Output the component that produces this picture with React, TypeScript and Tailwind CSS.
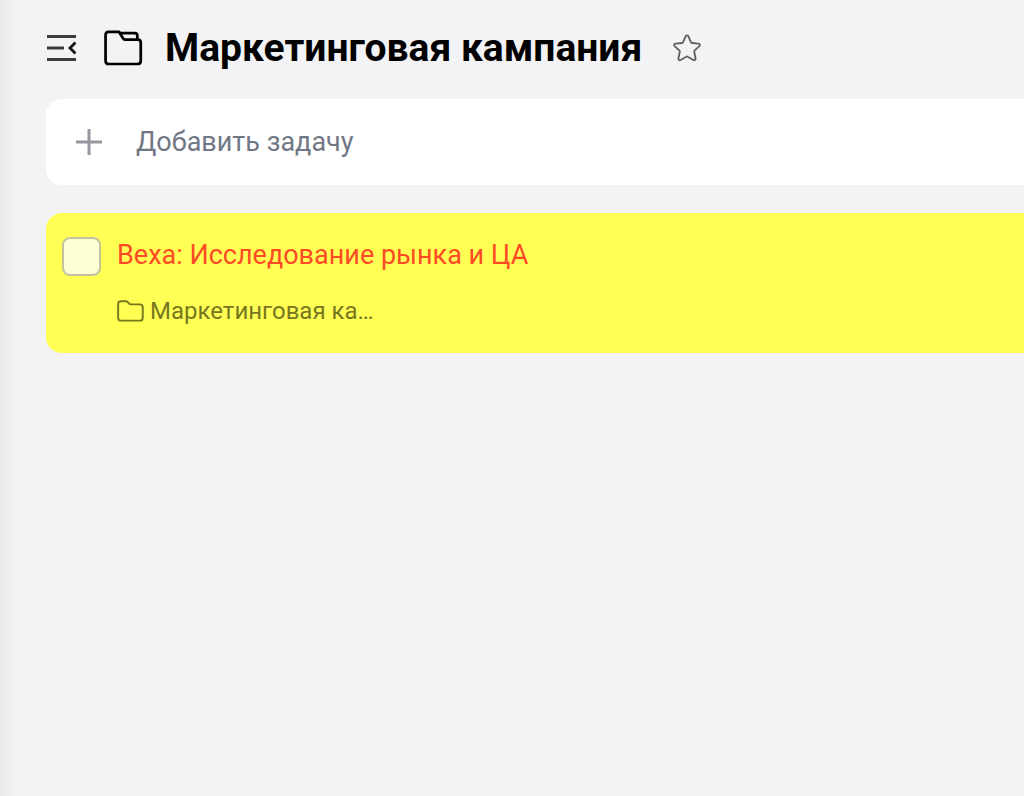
import { useState } from 'react';

interface Task {
  id: string;
  title: string;
  project: string;
}

const tasks: Task[] = [
  { id: 'task-1', title: 'Веха: Исследование рынка и ЦА', project: 'Маркетинговая ка…' },
];

function CollapseIcon() {
  return (
    <svg width="32" height="30" viewBox="0 0 32 30" fill="none" aria-hidden="true">
      <path d="M1 3.5H30M1 15H18M1 26.5H30" stroke="#3c3c3e" strokeWidth="2.8" />
      <path d="M29.5 9.5L24 15L29.5 20.5" stroke="#111111" strokeWidth="2.8" />
    </svg>
  );
}

function ProjectIcon() {
  return (
    <svg width="39" height="36" viewBox="0 0 40 36" fill="none" stroke="#000000" strokeWidth="2.8" strokeLinejoin="round" aria-hidden="true">
      <path d="M4.5 1.5H15.5L19.5 8C20 8.9 20.6 9.3 21.5 9.3H34.5C36.5 9.3 37.7 10.5 37.7 12.5V31C37.7 33.2 36.5 34.4 34.3 34.4H5C2.8 34.4 1.6 33.2 1.6 31V4.5C1.6 2.6 2.6 1.5 4.5 1.5Z" />
      <path d="M15.5 2.8H31.5C33.3 2.8 34.2 3.7 34.2 5.4V9.3" />
    </svg>
  );
}

function StarIcon() {
  return (
    <svg width="30" height="30" viewBox="0 0 30 30" fill="none" stroke="#5f5f62" strokeWidth="1.8" strokeLinejoin="round" aria-hidden="true">
      <path d="M13.7 3.2C14.2 2 15.8 2 16.3 3.2L18.9 9.2C19.1 9.7 19.5 10 20 10L26.6 10.7C27.9 10.8 28.4 12.3 27.4 13.2L22.7 17.4C22.3 17.8 22.1 18.3 22.2 18.8L23.6 25.5C23.8 26.8 22.6 27.6 21.4 27L15.7 23.8C15.3 23.5 14.7 23.5 14.3 23.8L8.6 27C7.4 27.6 6.2 26.8 6.4 25.5L7.8 18.8C7.9 18.3 7.7 17.8 7.3 17.4L2.6 13.2C1.6 12.3 2.1 10.8 3.4 10.7L10 10C10.5 10 10.9 9.7 11.1 9.2Z" />
    </svg>
  );
}

function FolderIcon() {
  return (
    <svg width="27" height="24" viewBox="0 0 28 24" fill="none" stroke="currentColor" strokeWidth="2" strokeLinejoin="round" aria-hidden="true">
      <path d="M4 1.9H9.3C10.1 1.9 10.7 2.2 11.2 2.8L12.6 4.3C13.1 4.9 13.7 5.1 14.4 5.1H23.8C25.6 5.1 26.7 6.1 26.7 7.9V19.2C26.7 21 25.6 22 23.8 22H4C2.3 22 1.2 21 1.2 19.2V4.7C1.2 2.9 2.3 1.9 4 1.9Z" />
    </svg>
  );
}

function TaskCard({ task }: { task: Task }) {
  const [done, setDone] = useState(false);

  return (
    <li className="flex items-start gap-4 rounded-l-2xl bg-[#ffff54] pt-6 pb-[26px] pl-4">
      <input
        id={task.id}
        type="checkbox"
        checked={done}
        onChange={(e) => setDone(e.target.checked)}
        className="size-[39px] shrink-0 appearance-none rounded-lg border-2 border-[#c3c3a0] bg-[#ffffd6] checked:bg-[#c3c3a0]"
      />
      <div className="min-w-0">
        <label htmlFor={task.id} className="block text-[27px] leading-9 text-[#ff4a26]">
          {task.title}
        </label>
        <div className="mt-[22px] flex items-center gap-1.5 text-2xl text-[#77771f]">
          <FolderIcon />
          <span>{task.project}</span>
        </div>
      </div>
    </li>
  );
}

export default function App() {
  return (
    <div className="min-h-screen bg-[#f3f3f5] bg-linear-to-r from-[#eaeaec] to-[#f3f3f5] to-[18px] pl-[46px] font-['Roboto',sans-serif]">
      <header className="flex items-center pt-6 pb-[27px]">
        <button type="button" aria-label="Свернуть меню">
          <CollapseIcon />
        </button>
        <span className="ml-[26px]">
          <ProjectIcon />
        </span>
        <h1 className="ml-[22px] text-[39px] leading-[48px] font-bold text-black">Маркетинговая кампания</h1>
        <button type="button" aria-label="В избранное" className="ml-[30px]">
          <StarIcon />
        </button>
      </header>

      <main>
        {/* New task */}
        <form
          onSubmit={(e) => e.preventDefault()}
          className="flex h-[86px] items-center gap-[34px] rounded-l-2xl bg-white pl-[30px]"
        >
          <button type="submit" aria-label="Добавить">
            <svg width="26" height="26" viewBox="0 0 26 26" stroke="#97979f" strokeWidth="3" aria-hidden="true">
              <path d="M13 0V26M0 13H26" />
            </svg>
          </button>
          <input
            type="text"
            aria-label="Добавить задачу"
            placeholder="Добавить задачу"
            className="min-w-0 flex-1 text-[27px] outline-none placeholder:text-[#717784]"
          />
        </form>

        <ul className="mt-7">
          {tasks.map((task) => (
            <TaskCard key={task.id} task={task} />
          ))}
        </ul>
      </main>
    </div>
  );
}
